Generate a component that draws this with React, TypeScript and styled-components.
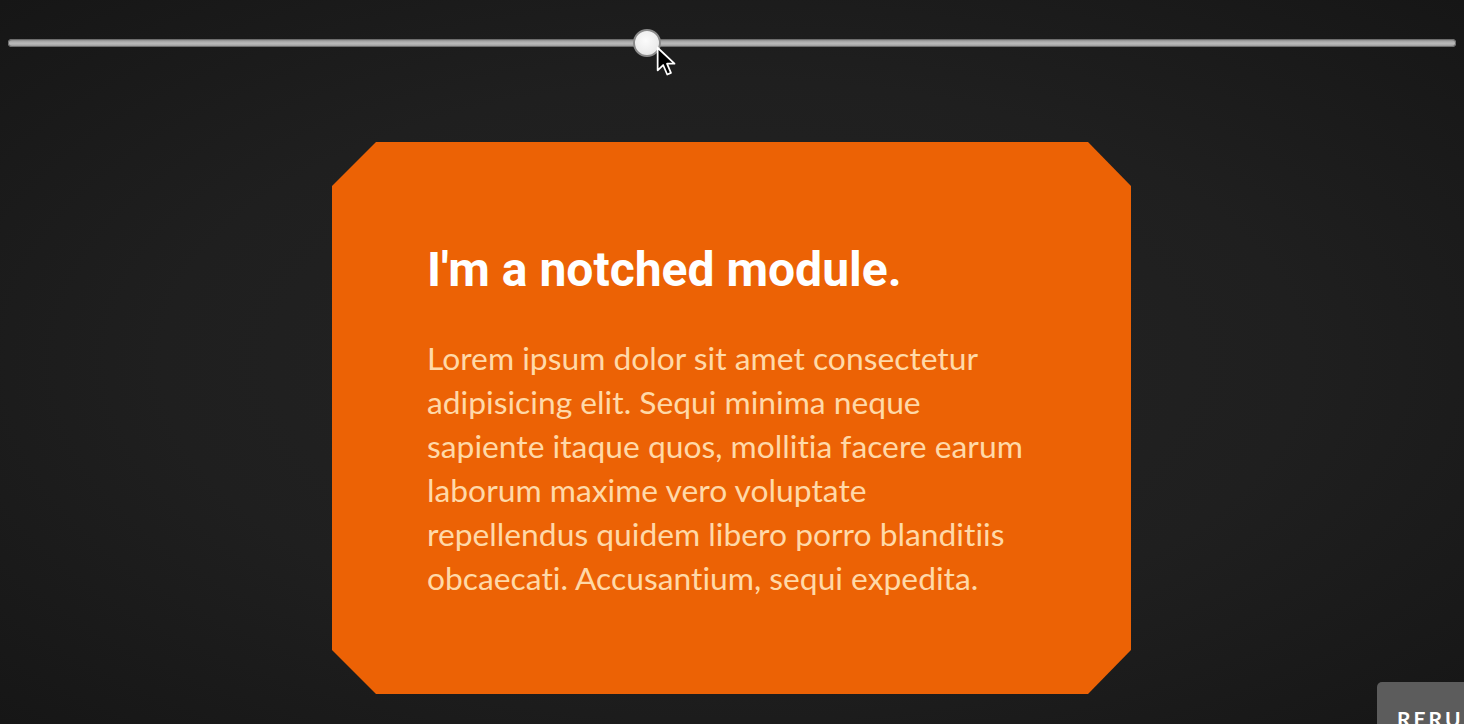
import React, { useState } from "react";
import styled, { createGlobalStyle } from "styled-components";

const GlobalStyle = createGlobalStyle`
  html, body {
    margin: 0;
    padding: 0;
    height: 100%;
  }
  body {
    background: radial-gradient(ellipse at center, #242424 0%, #1f1f1f 55%, #161616 100%);
    background-attachment: fixed;
    overflow: hidden;
  }
`;

const App = () => {
  const [value, setValue] = useState(44);

  return (
    <Page>
      <GlobalStyle />
      <SliderRow>
        <Range
          type="range"
          min={0}
          max={100}
          value={value}
          onChange={(e) => setValue(Number(e.target.value))}
        />
        <Cursor viewBox="0 0 20 28" width="22" height="31">
          <path
            d="M1.5 1.5 L1.5 22 L6.5 17.2 L10.2 25.8 L13.6 24.3 L10 16 L16.8 16 Z"
            fill="#000"
            stroke="#fff"
            strokeWidth="1.6"
            strokeLinejoin="round"
          />
        </Cursor>
      </SliderRow>

      <Stage>
        <Notched>
          <Heading>I'm a notched module.</Heading>
          <Body>
            Lorem ipsum dolor sit amet consectetur adipisicing elit. Sequi minima
            neque sapiente itaque quos, mollitia facere earum laborum maxime vero
            voluptate repellendus quidem libero porro blanditiis obcaecati.
            Accusantium, sequi expedita.
          </Body>
        </Notched>
      </Stage>

      <RerunButton>Rerun</RerunButton>
    </Page>
  );
};

const Page = styled.div`
  position: relative;
  width: 100vw;
  height: 100vh;
  display: flex;
  flex-direction: column;
  align-items: center;
`;

const SliderRow = styled.div`
  position: relative;
  width: 100%;
  box-sizing: border-box;
  padding: 28px 8px 0 8px;
  height: 60px;
`;

const Range = styled.input`
  -webkit-appearance: none;
  appearance: none;
  width: 100%;
  height: 30px;
  margin: 0;
  background: transparent;
  display: block;

  &::-webkit-slider-runnable-track {
    height: 8px;
    border-radius: 4px;
    background: linear-gradient(to bottom, #7c7c7c 0%, #aeaeae 35%, #bababa 60%, #8c8c8c 100%);
    box-shadow: inset 0 0 0 1px #6d6d6d;
  }

  &::-webkit-slider-thumb {
    -webkit-appearance: none;
    width: 28px;
    height: 28px;
    margin-top: -10px;
    border-radius: 50%;
    background: radial-gradient(circle at 45% 40%, #fbfbfb 0%, #eeeeee 55%, #dcdcdc 100%);
    border: 2px solid #8a8a8a;
    box-sizing: border-box;
  }

  &:focus {
    outline: none;
  }
`;

const Cursor = styled.svg`
  position: absolute;
  left: 656px;
  top: 46px;
  pointer-events: none;
`;

const Stage = styled.div`
  padding-top: 82px;
  display: flex;
  justify-content: center;
  width: 100%;
`;

const Notched = styled.section`
  --notch: 44px;
  width: 800px;
  box-sizing: border-box;
  padding: 99px 95px 94px 95px;
  background: #ec6205;
  clip-path: polygon(
    var(--notch) 0,
    calc(100% - var(--notch)) 0,
    calc(100% - 1px) var(--notch),
    calc(100% - 1px) calc(100% - var(--notch)),
    calc(100% - var(--notch)) 100%,
    var(--notch) 100%,
    0 calc(100% - var(--notch)),
    0 var(--notch)
  );
`;

const Heading = styled.h1`
  margin: 0 0 37px 0;
  font-family: Roboto, "Liberation Sans", sans-serif;
  font-weight: 700;
  font-size: 48px;
  line-height: 58px;
  color: #ffffff;
`;

const Body = styled.p`
  margin: 0;
  max-width: 600px;
  font-family: Lato, "Noto Sans", sans-serif;
  font-size: 31.8px;
  line-height: 44px;
  color: #ffd9a8;
  font-variant-ligatures: none;
`;

const RerunButton = styled.button`
  position: fixed;
  left: 1377px;
  top: 682px;
  width: 140px;
  height: 60px;
  padding: 12px 0 0 20px;
  text-align: left;
  border: none;
  border-radius: 5px 0 0 0;
  background: #5c5c5c;
  color: #ffffff;
  font-family: Lato, "Liberation Sans", sans-serif;
  font-weight: 700;
  font-size: 21px;
  letter-spacing: 3px;
  text-transform: uppercase;
  cursor: pointer;
  box-sizing: border-box;
`;

export default App;
